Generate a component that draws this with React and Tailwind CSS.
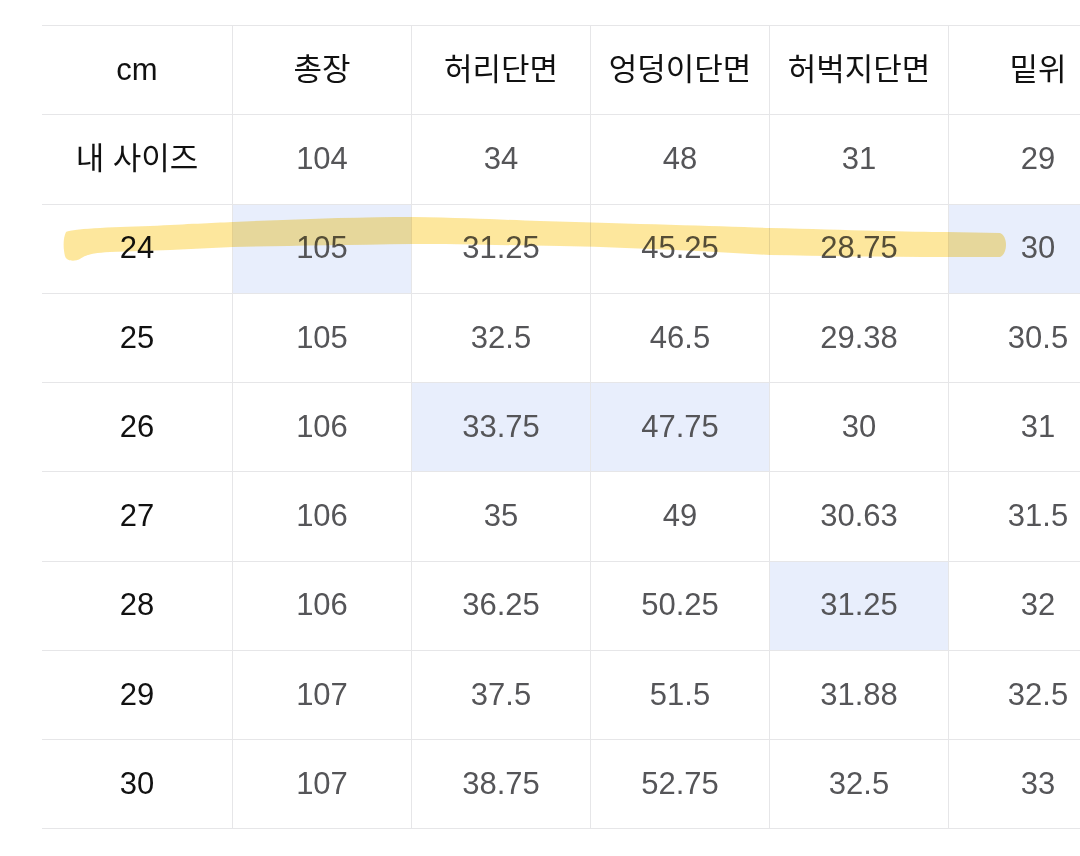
import React from "react";

const headers = ["cm", "총장", "허리단면", "엉덩이단면", "허벅지단면", "밑위"];

const rows = [
  { label: "내 사이즈", values: ["104", "34", "48", "31", "29"], marks: [] },
  { label: "24", values: ["105", "31.25", "45.25", "28.75", "30"], marks: [0, 4] },
  { label: "25", values: ["105", "32.5", "46.5", "29.38", "30.5"], marks: [] },
  { label: "26", values: ["106", "33.75", "47.75", "30", "31"], marks: [1, 2] },
  { label: "27", values: ["106", "35", "49", "30.63", "31.5"], marks: [] },
  { label: "28", values: ["106", "36.25", "50.25", "31.25", "32"], marks: [3] },
  { label: "29", values: ["107", "37.5", "51.5", "31.88", "32.5"], marks: [] },
  { label: "30", values: ["107", "38.75", "52.75", "32.5", "33"], marks: [] },
];

const font = {
  fontFamily: '"Liberation Sans", "Noto Sans CJK KR", sans-serif',
};

// yellow marker stroke drawn over the "24" row
const Highlighter = () => (
  <svg
    className="absolute left-0 top-0 pointer-events-none mix-blend-multiply"
    width="1080"
    height="856"
    viewBox="0 0 1080 856"
  >
    <path
      d="M66 232 C 70 229, 110 227, 150 226 C 190 224, 210 223, 233 222 C 300 219, 360 217, 413 217 C 470 218, 510 220, 540 221 C 640 224, 720 226, 770 228 C 850 230, 910 232, 947 232 L 1000 233 C 1008 236, 1008 254, 1000 257 L 947 257 C 880 257, 820 256, 770 255 C 700 251, 620 247, 560 246 C 500 245, 450 244, 413 244 C 340 245, 280 246, 233 247 C 190 249, 150 251, 110 252 C 90 253, 84 256, 80 259 C 74 262, 66 261, 65 256 C 63 248, 63 238, 66 232 Z"
      fill="#fcd34d"
      fillOpacity="0.55"
    />
  </svg>
);

const Cell = ({ children, first, head, marked }) => (
  <div
    className={`flex h-[89.25px] items-center justify-center border-b border-r border-[#e6e6e8] text-[31px] ${
      first ? "w-[191px] text-[#111]" : "w-[179px]"
    } ${head ? "text-[#111]" : first ? "" : "text-[#555558]"} ${
      marked ? "bg-[#e8eefc]" : "bg-white"
    }`}
  >
    {children}
  </div>
);

export default function App() {
  return (
    <div className="relative h-[856px] w-[1080px] overflow-hidden bg-white" style={font}>
      <div className="ml-[42px] mt-[25px] w-max border-t border-[#e6e6e8]">
        <div className="flex">
          {headers.map((h, i) => (
            <Cell key={h} first={i === 0} head>
              {h}
            </Cell>
          ))}
        </div>
        {rows.map((r) => (
          <div key={r.label} className="flex">
            <Cell first>{r.label}</Cell>
            {r.values.map((v, i) => (
              <Cell key={i} marked={r.marks.includes(i)}>
                {v}
              </Cell>
            ))}
          </div>
        ))}
      </div>
      <Highlighter />
    </div>
  );
}
